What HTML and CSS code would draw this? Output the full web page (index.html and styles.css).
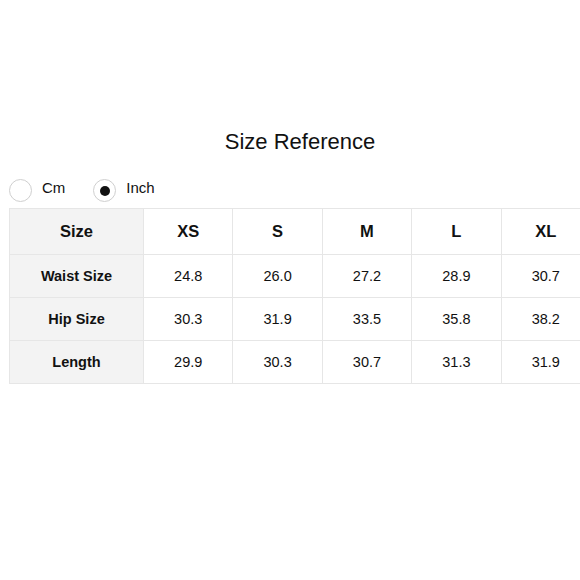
FILE: index.html
```html
<!DOCTYPE html>
<html>
<head>
<meta charset="utf-8">
<link rel="stylesheet" href="styles.css">
</head>
<body>
<div class="page">
  <h1 class="title">Size Reference</h1>
  <div class="units">
    <label class="unit"><span class="radio"></span><span class="unit-label">Cm</span></label>
    <label class="unit"><span class="radio checked"></span><span class="unit-label">Inch</span></label>
  </div>
  <table class="chart">
    <tr class="head">
      <th class="label">Size</th><th>XS</th><th>S</th><th>M</th><th>L</th><th>XL</th>
    </tr>
    <tr>
      <th class="label">Waist Size</th><td>24.8</td><td>26.0</td><td>27.2</td><td>28.9</td><td>30.7</td>
    </tr>
    <tr>
      <th class="label">Hip Size</th><td>30.3</td><td>31.9</td><td>33.5</td><td>35.8</td><td>38.2</td>
    </tr>
    <tr>
      <th class="label">Length</th><td>29.9</td><td>30.3</td><td>30.7</td><td>31.3</td><td>31.9</td>
    </tr>
  </table>
</div>
</body>
</html>
```
FILE: styles.css
```css
html, body {
  margin: 0;
  padding: 0;
  background: #fff;
}
body {
  font-family: "Liberation Sans", Arial, sans-serif;
  color: #111;
}
.page {
  width: 582px;
  padding: 129px 0 0 9px;
}
.title {
  margin: 0;
  text-align: center;
  font-size: 22px;
  font-weight: normal;
  line-height: 26px;
}
.units {
  display: flex;
  gap: 28px;
  margin-top: 22px;
  height: 26px;
  align-items: center;
}
.unit {
  display: flex;
  align-items: center;
  gap: 10px;
  font-size: 15px;
}
.radio {
  width: 21px;
  height: 21px;
  border: 1px solid #cfcfcf;
  border-radius: 50%;
  display: flex;
  align-items: center;
  justify-content: center;
  box-sizing: content-box;
}
.radio.checked::after {
  content: "";
  width: 10px;
  height: 10px;
  border-radius: 50%;
  background: #111;
  margin-top: 2px;
}
.unit-label {
  margin-top: -6px;
}
.chart {
  border-collapse: collapse;
  margin-top: 5px;
  table-layout: fixed;
  width: 582px;
}
.chart th, .chart td {
  border: 1.5px solid #e6e6e6;
  text-align: center;
  padding: 0;
  font-size: 14.5px;
  height: 42px;
}
.chart th {
  font-weight: bold;
}
.chart th.label {
  width: 133px;
  background: #f3f3f3;
}
.chart .head th {
  font-size: 16.5px;
  height: 45px;
}
```
